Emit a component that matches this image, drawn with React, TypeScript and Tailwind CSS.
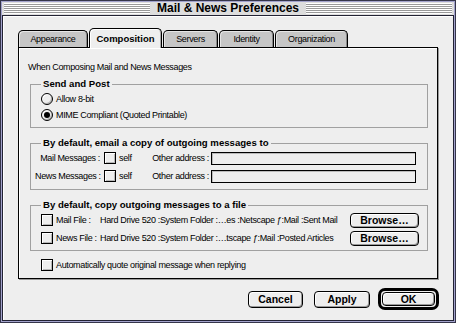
import React from 'react';

const small = "text-[9px] leading-[12px] tracking-[-0.35px] text-black whitespace-nowrap";
const bold = "text-[9.6px] leading-[12px] font-bold text-black whitespace-nowrap";

const Stripes = () => (
  <div className="flex-1 h-[11px] mx-[2px] bg-[image:repeating-linear-gradient(to_bottom,#ffffff_0px,#ffffff_1px,#999999_1px,#999999_2px)]" />
);

const Check = ({ className = '' }: { className?: string }) => (
  <span className={"w-[12px] h-[12px] shrink-0 border border-black bg-[#eeeeee] shadow-[inset_1px_1px_0_#ffffff,inset_-1px_-1px_0_#b8b8b8] " + className} />
);

const Radio = ({ on }: { on?: boolean }) => (
  <span className="w-[12px] h-[12px] shrink-0 rounded-full border border-black bg-[#eeeeee] shadow-[inset_1px_1px_0_#ffffff,inset_-1px_-1px_0_#b8b8b8] flex items-center justify-center">
    {on && <span className="w-[6px] h-[6px] rounded-full bg-black" />}
  </span>
);

const Button = ({ label, className = '' }: { label: string; className?: string }) => (
  <button className={"flex items-center justify-center rounded-[4px] border border-black bg-[#eeeeee] shadow-[inset_1px_1px_0_#ffffff,inset_-1px_-1px_0_#9a9a9a] text-[10.5px] leading-[12px] font-bold text-black " + className}>
    {label}
  </button>
);

const tabs = [
  { label: 'Appearance', w: 'w-[70px]', on: false },
  { label: 'Composition', w: 'w-[73px]', on: true },
  { label: 'Servers', w: 'w-[55px]', on: false },
  { label: 'Identity', w: 'w-[55px]', on: false },
  { label: 'Organization', w: 'w-[73px]', on: false },
];

export default function App() {
  return (
    <div className="w-[456px] h-[323px] border border-[#35354a] font-['Liberation_Sans',Arial,sans-serif]">
      <div className="h-full border border-[#a2a2cc] flex flex-col">
        {/* title bar */}
        <div className="h-[13px] bg-[#dddddd] flex items-center">
          <Stripes />
          <span className="px-[5px] text-[12px] leading-[13px] font-bold text-black">Mail &amp; News Preferences</span>
          <Stripes />
        </div>

        {/* body */}
        <div className="flex-1 border border-[#222233] bg-[#eeeeee] shadow-[inset_1px_1px_0_#ffffff] pt-[12px] pl-[15px] pr-[14px] flex flex-col">
          <div className="flex items-end gap-[1px] h-[20px] -mb-[1px] relative z-10">
            {tabs.map((t) =>
              t.on ? (
                <div key={t.label} className={t.w + " h-[20px] rounded-t-[5px] border border-b-0 border-black bg-[#eeeeee] shadow-[inset_1px_1px_0_#ffffff,inset_-1px_0_0_#aaaaaa] flex items-center justify-center text-[9.5px] leading-[12px] font-bold text-black"}>
                  {t.label}
                </div>
              ) : (
                <div key={t.label} className={t.w + " h-[17px] mb-[1px] rounded-t-[5px] border border-b-0 border-black bg-[#c6c6c6] shadow-[inset_1px_1px_0_#e6e6e6,inset_-1px_0_0_#888888] flex items-center justify-center " + small}>
                  {t.label}
                </div>
              )
            )}
          </div>

          <div className="w-[420px] h-[232px] border border-black bg-[#eeeeee] shadow-[inset_1px_1px_0_#ffffff,1px_1px_0_#999999] px-[9px] flex flex-col">
            <div className={small + " mt-[13px]"}>When Composing Mail and News Messages</div>

            <fieldset className="ml-[2px] mt-[5px] border border-[#a0a0a0] pl-[10px] pb-[4px] min-w-0">
              <legend className={bold + " px-[2px]"}>Send and Post</legend>
              <div className="flex items-center h-[16px] mt-[1px]">
                <Radio />
                <span className={small + " ml-[3px]"}>Allow 8-bit</span>
              </div>
              <div className="flex items-center h-[16px]">
                <Radio on />
                <span className={small + " ml-[3px]"}>MIME Compliant (Quoted Printable)</span>
              </div>
            </fieldset>

            <fieldset className="ml-[2px] mt-[9px] border border-[#a0a0a0] pl-[4px] pr-[11px] pb-[4px] min-w-0">
              <legend className={bold + " ml-[6px] px-[2px]"}>By default, email a copy of outgoing messages to</legend>
              {['Mail Messages :', 'News Messages :'].map((l) => (
                <div key={l} className="flex items-center h-[18px]">
                  <span className={small + " w-[65px] text-right"}>{l}</span>
                  <Check className="ml-[4px]" />
                  <span className={small + " ml-[3px] w-[32px]"}>self</span>
                  <span className={small + " w-[58px] text-right"}>Other address :</span>
                  <span className="ml-[2px] flex-1 h-[13px] border border-black bg-[#eeeeee] shadow-[inset_1px_1px_0_#bbbbbb]" />
                </div>
              ))}
            </fieldset>

            <fieldset className="ml-[2px] mt-[9px] border border-[#a0a0a0] pl-[10px] pr-[8px] pb-[3px] min-w-0">
              <legend className={bold + " px-[2px]"}>By default, copy outgoing messages to a file</legend>
              {[
                { l: 'Mail File :', p: 'Hard Drive 520 :System Folder :…es :Netscape ƒ:Mail :Sent Mail' },
                { l: 'News File :', p: 'Hard Drive 520 :System Folder :…tscape ƒ:Mail :Posted Articles' },
              ].map((r) => (
                <div key={r.l} className="flex items-center h-[18px]">
                  <Check />
                  <span className={small + " ml-[3px] min-w-[44px] pr-[2px]"}>{r.l}</span>
                  <span className={small + " flex-1 overflow-hidden"}>{r.p}</span>
                  <Button label="Browse…" className="w-[69px] h-[15px]" />
                </div>
              ))}
            </fieldset>

            <div className="flex items-center h-[14px] mt-[7px] ml-[13px]">
              <Check />
              <span className={small + " ml-[3px]"}>Automatically quote original message when replying</span>
            </div>
          </div>

          <div className="flex justify-end items-center mt-[9px]">
            <Button label="Cancel" className="w-[55px] h-[17px]" />
            <Button label="Apply" className="w-[56px] h-[17px] ml-[11px]" />
            <div className="ml-[8px] w-[61px] h-[22px] rounded-[7px] border-[3px] border-black p-[1px] flex">
              <Button label="OK" className="flex-1" />
            </div>
          </div>
        </div>
      </div>
    </div>
  );
}
